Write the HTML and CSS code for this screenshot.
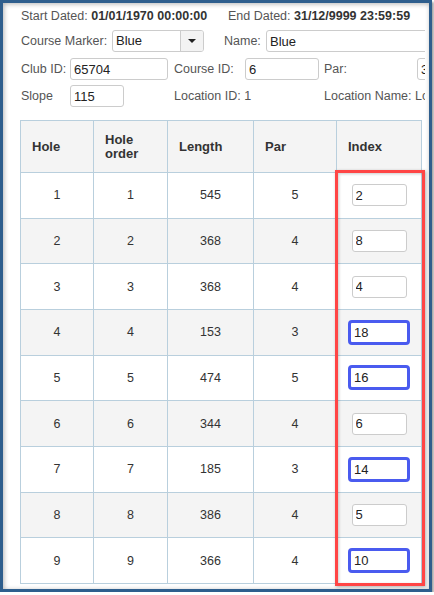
FILE: index.html
```html
<!DOCTYPE html>
<html>
<head>
<meta charset="utf-8">
<link rel="stylesheet" href="styles.css">
</head>
<body>
<div class="frame">
  <div class="viewport">
    <div class="form">
      <div class="row row1">
        <div class="grp-start"><span class="lbl">Start Dated: </span><b class="val">01/01/1970 00:00:00</b></div>
        <div><span class="lbl">End Dated: </span><b class="val">31/12/9999 23:59:59</b></div>
      </div>
      <div class="row row2">
        <span class="lbl w-marker">Course Marker:</span>
        <div class="select"><span class="sel-text">Blue</span><span class="sel-btn"><span class="caret"></span></span></div>
        <span class="lbl w-name">Name:</span>
        <input class="inp inp-name" value="Blue">
      </div>
      <div class="grid row3">
        <span class="lbl">Club ID:</span>
        <input class="inp" value="65704">
        <span class="lbl pl">Course ID:</span>
        <input class="inp" value="6">
        <span class="lbl pl2">Par:</span>
        <input class="inp" value="36">
      </div>
      <div class="grid row4">
        <span class="lbl">Slope</span>
        <input class="inp inp-slope" value="115">
        <span class="lbl pl span2">Location ID: 1</span>
        <span class="lbl pl2 span2">Location Name: Location</span>
      </div>
    </div>
    <table class="holes">
      <colgroup>
        <col class="c1"><col class="c2"><col class="c3"><col class="c4"><col class="c5">
      </colgroup>
      <thead>
        <tr><th>Hole</th><th>Hole<br>order</th><th>Length</th><th>Par</th><th>Index</th></tr>
      </thead>
      <tbody>
        <tr><td>1</td><td>1</td><td>545</td><td>5</td><td><input class="idx" value="2"></td></tr>
        <tr><td>2</td><td>2</td><td>368</td><td>4</td><td><input class="idx" value="8"></td></tr>
        <tr><td>3</td><td>3</td><td>368</td><td>4</td><td><input class="idx" value="4"></td></tr>
        <tr><td>4</td><td>4</td><td>153</td><td>3</td><td><input class="idx hl" value="18"></td></tr>
        <tr><td>5</td><td>5</td><td>474</td><td>5</td><td><input class="idx hl" value="16"></td></tr>
        <tr><td>6</td><td>6</td><td>344</td><td>4</td><td><input class="idx" value="6"></td></tr>
        <tr><td>7</td><td>7</td><td>185</td><td>3</td><td><input class="idx hl" value="14"></td></tr>
        <tr><td>8</td><td>8</td><td>386</td><td>4</td><td><input class="idx" value="5"></td></tr>
        <tr><td>9</td><td>9</td><td>366</td><td>4</td><td><input class="idx hl" value="10"></td></tr>
      </tbody>
    </table>
  </div>
  <div class="redbox"></div>
</div>
</body>
</html>
```
FILE: styles.css
```css
html, body {
  margin: 0;
  padding: 0;
  background: #ffffff;
}
body {
  font-family: "Liberation Sans", Arial, sans-serif;
  color: #333;
}
.frame {
  position: relative;
  box-sizing: border-box;
  width: 432px;
  height: 592px;
  border: 3px solid #2e5e8d;
  background: #fff;
  box-shadow: 2px 2px 2px rgba(0,0,0,0.35), inset 1px 1px 5px rgba(0,0,0,0.3);
}
.viewport {
  width: 422px;
  height: 586px;
  overflow: hidden;
  box-sizing: border-box;
  padding-left: 17px;
  padding-top: 2px;
}
.form {
  font-size: 12.5px;
}
.row {
  display: flex;
  align-items: center;
  height: 22px;
  white-space: nowrap;
}
.row > * { flex-shrink: 0; }
.row2 { margin-top: 3px; }
.grid {
  display: grid;
  grid-template-columns: 50px 98px 77px 74px 98px 100px;
  align-items: center;
  height: 22px;
  white-space: nowrap;
}
.row3 { margin-top: 6px; }
.row4 { margin-top: 5px; }
.lbl { color: #555; padding-left: 1px; }
.val { color: #333; font-weight: bold; }
.grp-start { width: 207px; }
.pl { padding-left: 6px; }
.pl2 { padding-left: 5px; }
.span2 { grid-column: span 2; }
.w-marker { width: 91px; }
.w-name { width: 42px; margin-left: 19px; }
.inp {
  box-sizing: border-box;
  height: 22px;
  width: 100%;
  margin: 0;
  border: 1px solid #cccccc;
  border-radius: 3px;
  padding: 0 3px;
  font-family: "Liberation Sans", Arial, sans-serif;
  font-size: 13px;
  color: #222;
  background: #fff;
  outline: none;
}
.inp-name { width: 200px; }
.inp-slope { width: 54px; }
.select {
  box-sizing: border-box;
  display: flex;
  width: 92px;
  height: 22px;
  border: 1px solid #cccccc;
  border-radius: 3px;
  background: #fff;
  overflow: hidden;
}
.sel-text {
  flex: 1;
  padding-left: 3px;
  font-size: 13px;
  color: #222;
  line-height: 20px;
}
.sel-btn {
  width: 22px;
  border-left: 1px solid #cccccc;
  background: #f3f3f3;
  display: flex;
  align-items: center;
  justify-content: center;
}
.caret {
  width: 0;
  height: 0;
  border-left: 4px solid transparent;
  border-right: 4px solid transparent;
  border-top: 4px solid #222;
}
.holes {
  margin-top: 13px;
  border-collapse: collapse;
  table-layout: fixed;
  width: 402px;
}
.c1 { width: 73px; }
.c2 { width: 74px; }
.c3 { width: 86px; }
.c4 { width: 83px; }
.c5 { width: 85px; }
.holes th, .holes td {
  border: 1px solid #b9cfdd;
}
.holes th {
  height: 51px;
  background: #f4f4f4;
  text-align: left;
  font-size: 13px;
  font-weight: bold;
  color: #333;
  padding: 0 0 0 11px;
  line-height: 14px;
}
.holes td {
  height: 44.67px;
  padding: 0;
  text-align: center;
  font-size: 12.5px;
  color: #333;
}
.holes tbody tr:nth-child(even) td {
  background: #f4f4f4;
}
.idx {
  box-sizing: border-box;
  width: 55px;
  height: 22px;
  margin: 0;
  border: 1px solid #cccccc;
  border-radius: 3px;
  padding: 0 3px;
  font-family: "Liberation Sans", Arial, sans-serif;
  font-size: 13px;
  color: #222;
  background: #fff;
  vertical-align: middle;
  outline: none;
}
.idx.hl {
  width: 62px;
  height: 25px;
  border: 3px solid #4a5bef;
  border-radius: 4px;
  padding: 0 3px;
}
.redbox {
  position: absolute;
  left: 332px;
  top: 167px;
  width: 90px;
  height: 416px;
  box-sizing: border-box;
  border: 3px solid #ff4545;
  box-shadow: 1px 1px 3px rgba(0,0,0,0.3), inset 1px 1px 3px rgba(0,0,0,0.2);
  pointer-events: none;
}
```
